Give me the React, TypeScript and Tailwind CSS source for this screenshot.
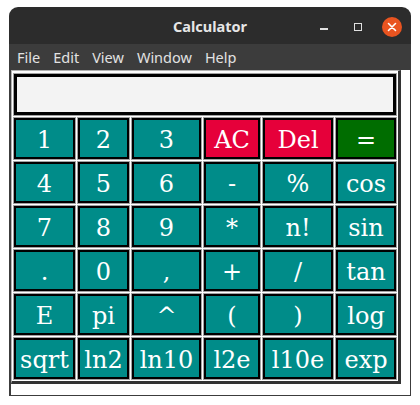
const rows: string[][] = [
  ["1", "2", "3", "AC", "Del", "="],
  ["4", "5", "6", "-", "%", "cos"],
  ["7", "8", "9", "*", "n!", "sin"],
  [".", "0", ",", "+", "/", "tan"],
  ["E", "pi", "^", "(", ")", "log"],
  ["sqrt", "ln2", "ln10", "l2e", "l10e", "exp"],
];

const menus = ["File", "Edit", "View", "Window", "Help"];

function keyColor(label: string) {
  if (label === "AC" || label === "Del") return "bg-[#e6003a]";
  if (label === "=") return "bg-[#006d00]";
  return "bg-[#008c89]";
}

function Key({ label }: { label: string }) {
  return (
    <button className="border border-[#a2a2a2] p-0 m-0 h-[43px] bg-white">
      <span
        className={`flex h-full w-full items-center justify-center border-2 border-black pt-[2px] text-[24px] leading-none text-white font-['DejaVu_Serif',serif] ${keyColor(label)}`}
      >
        {label}
      </span>
    </button>
  );
}

export default function App() {
  return (
    <div className="w-[420px] h-[405px] bg-white pt-[7px] pl-[9px]">
      <div className="w-[402px] h-[389px] flex flex-col rounded-t-[9px] overflow-hidden">
        {/* Title bar */}
        <div className="h-[37px] bg-[#2c2c2c] grid grid-cols-[1fr_auto_1fr] items-center">
          <div />
          <div className="text-[14.5px] font-bold text-[#e6e6e6] font-['Noto_Sans',sans-serif] pt-[2px]">
            Calculator
          </div>
          <div className="flex items-center justify-end pr-[9px] pt-[2px]">
            <span className="w-[8px] h-[1.5px] bg-[#e0e0e0] mt-[5px]" />
            <span className="w-[8px] h-[8px] border border-[#e0e0e0] ml-[26px]" />
            <span className="w-[20px] h-[20px] rounded-full bg-[#e95420] ml-[20px] flex items-center justify-center">
              <svg width="10" height="10" viewBox="0 0 10 10">
                <path d="M1.5 1.5 L8.5 8.5 M8.5 1.5 L1.5 8.5" stroke="#ffffff" strokeWidth="1.6" strokeLinecap="round" />
              </svg>
            </span>
          </div>
        </div>

        {/* Menu bar */}
        <div className="h-[26px] bg-[#3c3c3c] flex items-center gap-[13px] pl-[8px] pt-[2px] text-[14.5px] text-[#e2e2e2] font-['Noto_Sans',sans-serif]">
          {menus.map((m) => (
            <span key={m}>{m}</span>
          ))}
        </div>

        {/* Body */}
        <div className="flex-1 bg-white border-l-2 border-r border-b border-[#3c3c3c]">
          <div className="w-[390px] border-l border-t border-[#b4b4b4] border-r-[3px] border-b-[3px] border-r-[#333333] border-b-[#333333] pl-px pr-px pt-[2px] pb-px">
            <div className="h-[43px] border border-[#a2a2a2] mb-px">
              <div className="h-full border-[3px] border-black bg-[#f3f3f3]" />
            </div>
            <div className="grid grid-cols-[63px_53px_71px_58px_72px_62px] gap-px">
              {rows.flat().map((label, i) => (
                <Key key={i} label={label} />
              ))}
            </div>
          </div>
        </div>
      </div>
    </div>
  );
}
